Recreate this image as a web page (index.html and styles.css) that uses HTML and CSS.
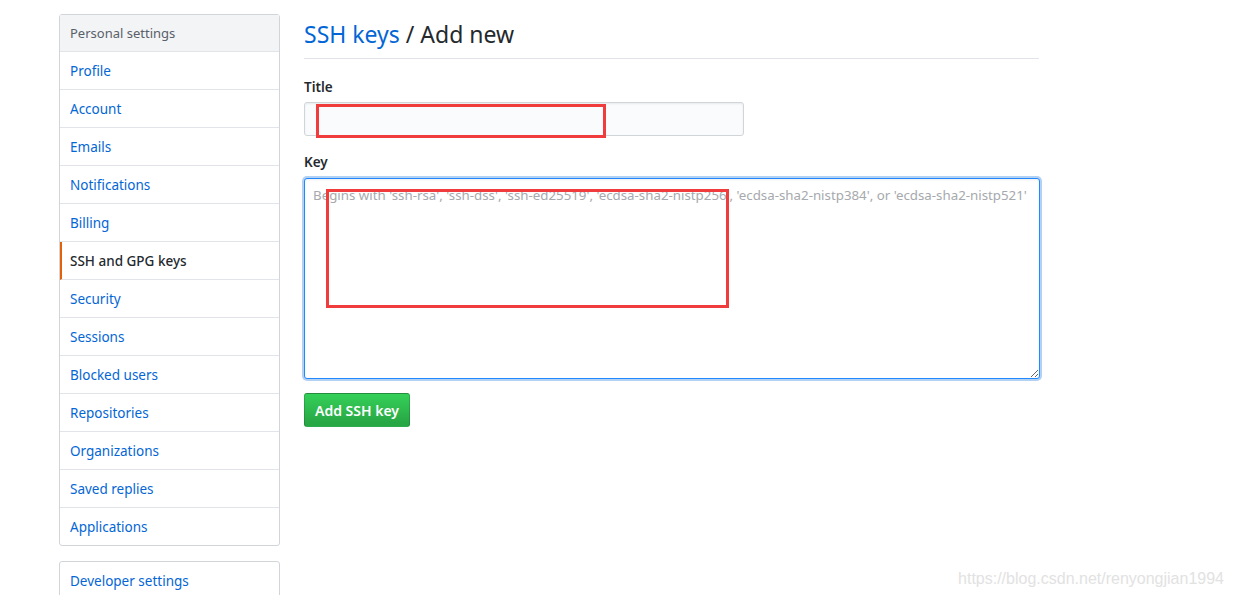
FILE: index.html
```html
<!DOCTYPE html>
<html lang="en">
  <head>
    <meta charset="UTF-8" />
    <title>SSH keys / Add new</title>
    <link rel="stylesheet" href="styles.css">
  </head>
  <body>
    <div class="page">
      <aside class="sidebar">
        <nav class="menu">
          <h3 class="menu-heading">Personal settings</h3>
          <a class="menu-item" href="#">Profile</a>
          <a class="menu-item" href="#">Account</a>
          <a class="menu-item" href="#">Emails</a>
          <a class="menu-item" href="#">Notifications</a>
          <a class="menu-item" href="#">Billing</a>
          <a class="menu-item selected" href="#">SSH and GPG keys</a>
          <a class="menu-item" href="#">Security</a>
          <a class="menu-item" href="#">Sessions</a>
          <a class="menu-item" href="#">Blocked users</a>
          <a class="menu-item" href="#">Repositories</a>
          <a class="menu-item" href="#">Organizations</a>
          <a class="menu-item" href="#">Saved replies</a>
          <a class="menu-item" href="#">Applications</a>
        </nav>
        <nav class="menu">
          <a class="menu-item" href="#">Developer settings</a>
        </nav>
      </aside>

      <main class="main">
        <div class="subhead">
          <h2 class="subhead-title"><a href="#">SSH keys</a> / Add new</h2>
        </div>

        <form class="key-form">
          <div class="form-group title-group">
            <label for="title">Title</label>
            <div class="field">
              <input type="text" id="title" class="title-input" />
              <span class="mark mark-title"></span>
            </div>
          </div>

          <div class="form-group key-group">
            <label for="key">Key</label>
            <div class="field">
              <textarea id="key" class="key-input" placeholder="Begins with 'ssh-rsa', 'ssh-dss', 'ssh-ed25519', 'ecdsa-sha2-nistp256', 'ecdsa-sha2-nistp384', or 'ecdsa-sha2-nistp521'"></textarea>
              <span class="mark mark-key"></span>
            </div>
          </div>

          <button type="submit" class="btn-primary">Add SSH key</button>
        </form>
      </main>
    </div>

    <div class="watermark">https://blog.csdn.net/renyongjian1994</div>
  </body>
</html>
```

FILE: styles.css
```css
body {
  margin: 0;
  font-family: "Noto Sans", "Open Sans", sans-serif;
  font-size: 14px;
  color: #24292e;
  background-color: white;
}

a {
  color: #0366d6;
  text-decoration: none;
}

.page {
  display: flex;
  align-items: flex-start;
  gap: 24px;
  padding: 14px 0 0 59px;
}

.sidebar {
  width: 221px;
  flex-shrink: 0;
}

.menu {
  border: 1px solid #d1d5da;
  border-radius: 3px;
  margin-bottom: 15px;
  background-color: white;
}

.menu-heading {
  margin: 0;
  padding: 8px 10px;
  font-size: 13px;
  font-weight: normal;
  line-height: 20px;
  color: #586069;
  background-color: #f3f4f6;
  border-bottom: 1px solid #e1e4e8;
}

.menu-item {
  display: block;
  padding: 9px 10px 7px;
  line-height: 21px;
  font-size: 13.5px;
  border-bottom: 1px solid #e1e4e8;
}

.menu-item:last-child {
  border-bottom: none;
}

.menu-item.selected {
  color: #24292e;
  font-weight: 500;
  border-left: 2px solid #e36209;
  padding-left: 8px;
}

.main {
  width: 735px;
}

.subhead {
  padding-top: 4px;
  padding-bottom: 8px;
  border-bottom: 1px solid #e1e4e8;
  margin-bottom: 18px;
}

.subhead-title {
  margin: 0;
  font-size: 23px;
  font-weight: normal;
  line-height: 32px;
}

.form-group {
  margin-bottom: 15px;
}

.form-group label {
  display: block;
  margin-bottom: 6px;
  font-weight: 600;
  font-size: 13.5px;
  line-height: 20px;
}

.title-group {
  margin-bottom: 16px;
}

.title-group label {
  margin-bottom: 5px;
}

.key-group {
  margin-bottom: 14px;
}

.field {
  position: relative;
}

.title-input {
  display: block;
  box-sizing: border-box;
  width: 440px;
  height: 34px;
  padding: 6px 8px;
  border: 1px solid #d1d5da;
  border-radius: 3px;
  background-color: #fafbfc;
  box-shadow: inset 0 1px 2px rgba(27, 31, 35, 0.075);
}

.key-input {
  display: block;
  box-sizing: border-box;
  width: 736px;
  height: 201px;
  padding: 6px 8px;
  font-family: "Noto Sans", "Open Sans", sans-serif;
  font-size: 13.3px;
  line-height: 20px;
  border: 1px solid #2188ff;
  border-radius: 3px;
  background-color: white;
  outline: none;
  box-shadow: inset 0 1px 2px rgba(27, 31, 35, 0.075), 0 0 0 2px rgba(3, 102, 214, 0.3);
}

.key-input::placeholder {
  color: #a6a9ad;
}

.mark {
  position: absolute;
  border: 3px solid #f03c3c;
  box-sizing: border-box;
}

.mark-title {
  left: 12px;
  top: 2px;
  width: 290px;
  height: 34px;
}

.mark-key {
  left: 22px;
  top: 11px;
  width: 403px;
  height: 119px;
}

.btn-primary {
  padding: 6px 10px;
  height: 34px;
  font-family: "Noto Sans", "Open Sans", sans-serif;
  font-size: 14px;
  font-weight: 600;
  color: white;
  background-color: #28a745;
  background-image: linear-gradient(-180deg, #34d058 0%, #28a745 90%);
  border: 1px solid rgba(27, 31, 35, 0.2);
  border-radius: 3px;
  cursor: pointer;
}

.watermark {
  position: absolute;
  right: 10px;
  bottom: 7px;
  font-family: "Liberation Sans", Arial, sans-serif;
  font-size: 16px;
  color: #e2e2e2;
}
```
